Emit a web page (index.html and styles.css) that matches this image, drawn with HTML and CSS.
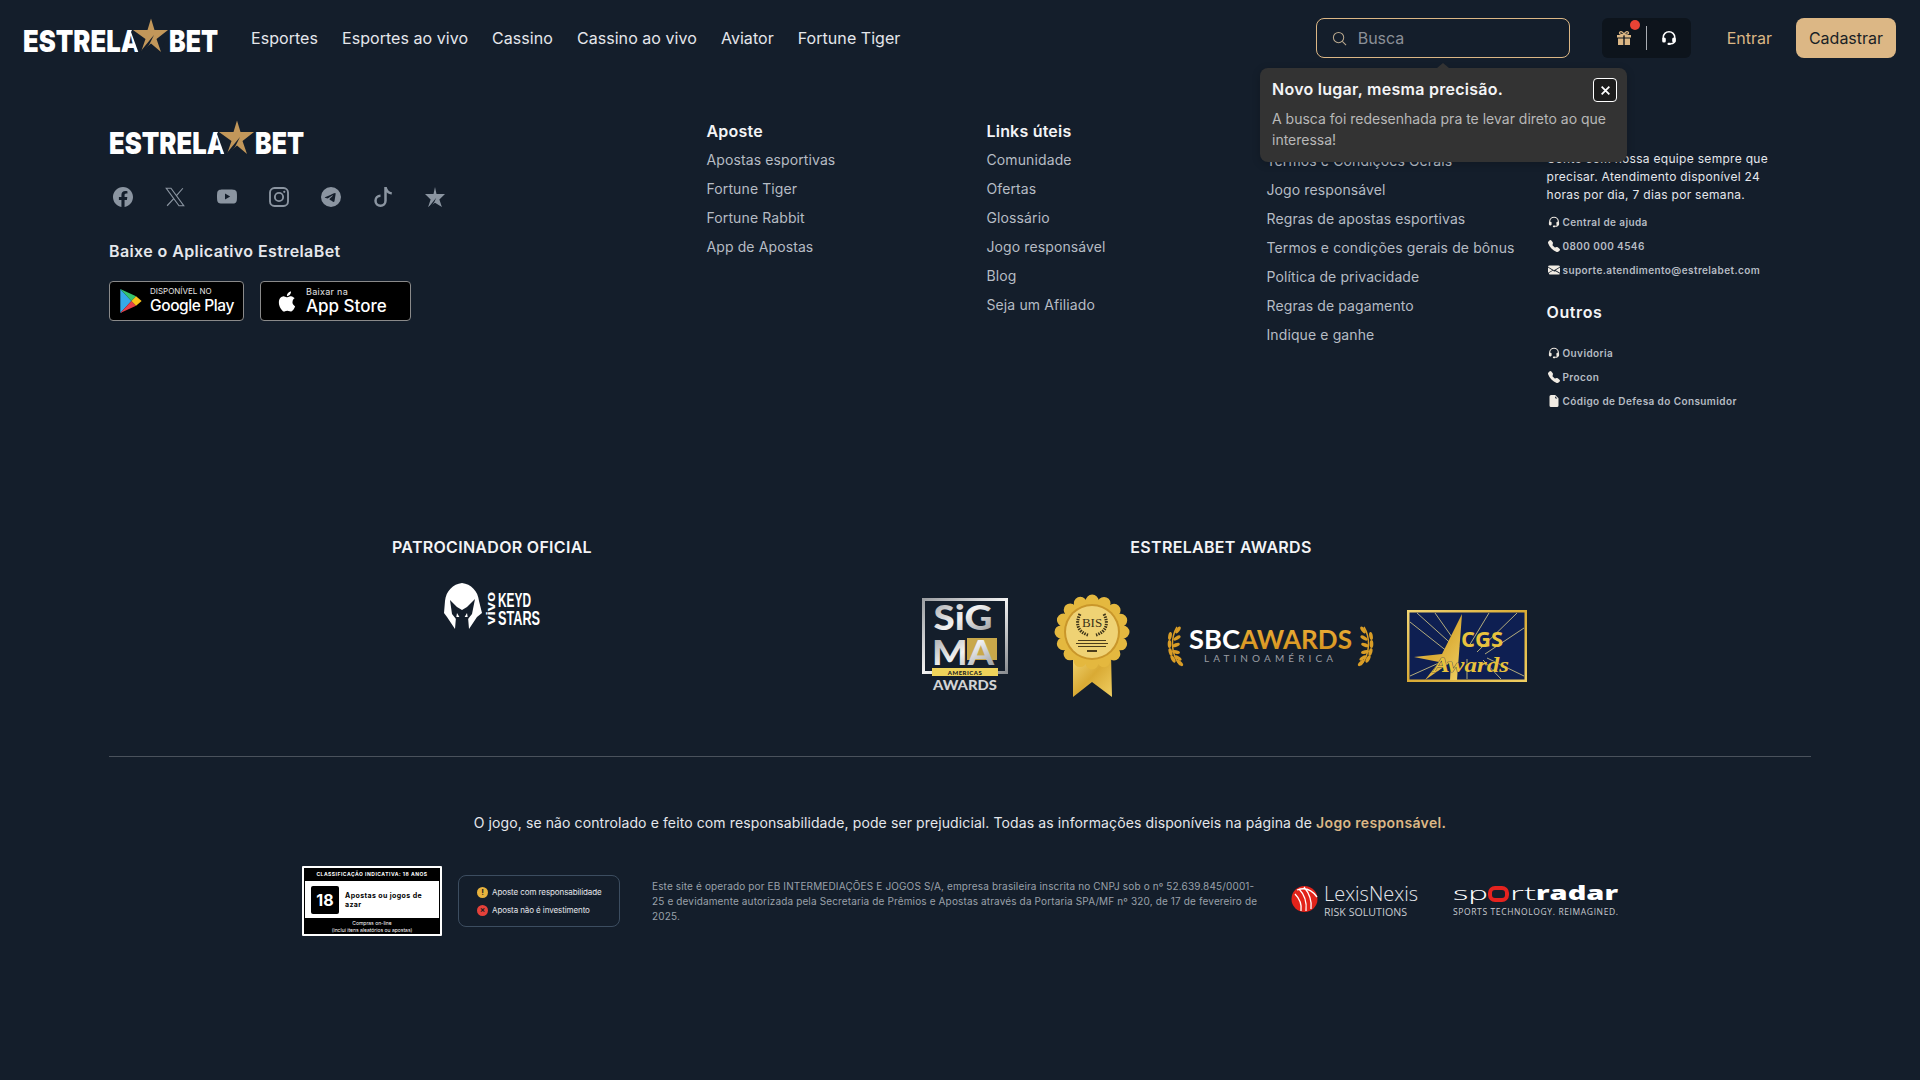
FILE: index.html
```html
<!DOCTYPE html>
<html lang="pt-BR">
<head>
  <meta charset="UTF-8">
  <meta name="viewport" content="width=device-width, initial-scale=1">
  <title>EstrelaBet</title>
  <link rel="stylesheet" href="styles.css">
</head>
<body>

  <svg class="sprite" aria-hidden="true">
    <symbol id="logo" viewBox="0 0 196 36">
      <text class="logo-text" x="0" y="34" textLength="118" lengthAdjust="spacingAndGlyphs">ESTRELA</text>
      <text class="logo-text" x="146" y="34" textLength="49" lengthAdjust="spacingAndGlyphs">BET</text>
      <polygon fill="#141e2b" points="110,10 146,10 146,14 136,36 116,36 108,14"/>
      <polygon fill="#c2975a" points="128,0.500 131.500,12 145,12 133.500,21 138,34 128,25.500 118,34 122.500,21 110,12 124.500,12"/>
      <polygon fill="#141e2b" points="117,34 131,17 126,27 120,34"/>
    </symbol>
    <symbol id="i-headset" viewBox="0 0 16 16">
      <path fill="none" stroke="currentColor" stroke-width="1.500" d="M2.200 9V7.500a5.800 5.800 0 0 1 11.600 0V10c0 2.500-1.500 3.700-4 3.700"/>
      <rect x="1.200" y="7.500" width="3.600" height="5" rx="1.500" fill="currentColor"/>
      <rect x="11.200" y="7.500" width="3.600" height="5" rx="1.500" fill="currentColor"/>
      <rect x="6.500" y="12.700" width="3.500" height="2.300" rx="1" fill="currentColor"/>
    </symbol>
    <symbol id="i-phone" viewBox="0 0 16 16">
      <path fill="currentColor" d="M1.885.511a1.745 1.745 0 0 1 2.610.163L6.290 2.980c.329.423.445.974.315 1.494l-.547 2.190a.680.680 0 0 0 .178.643l2.457 2.457a.680.680 0 0 0 .644.178l2.189-.547a1.750 1.750 0 0 1 1.494.315l2.306 1.794c.829.645.905 1.870.163 2.611l-1.034 1.034c-.740.740-1.846 1.065-2.877.702a18.600 18.600 0 0 1-7.010-4.420 18.600 18.600 0 0 1-4.420-7.009c-.362-1.030-.037-2.137.703-2.877z"/>
    </symbol>
    <symbol id="i-mail" viewBox="0 0 16 16">
      <path fill="currentColor" d="M.05 3.555A2 2 0 0 1 2 2h12a2 2 0 0 1 1.950 1.555L8 8.414zM0 4.697v7.104l5.803-3.558zM6.761 8.830l-5.570 3.225A2 2 0 0 0 2 14h12a2 2 0 0 0 1.808-1.144l-5.570-3.225L8 10.086zM16 11.801V4.697l-5.803 3.546z"/>
    </symbol>
    <symbol id="i-file" viewBox="0 0 16 16">
      <path fill="currentColor" d="M4 0h5.293A1 1 0 0 1 10 .293L13.707 4a1 1 0 0 1 .293.707V14a2 2 0 0 1-2 2H4a2 2 0 0 1-2-2V2a2 2 0 0 1 2-2m5.500 1.500v2a1 1 0 0 0 1 1h2z"/>
    </symbol>
    <symbol id="laurel" viewBox="0 0 16 42">
      <path fill="none" stroke="#d99d26" stroke-width="1.500" d="M10 2C4 12 3 28 13 40"/>
      <ellipse cx="11" cy="5" rx="1.800" ry="4" fill="#d99d26" transform="rotate(35 11 5)"/>
      <ellipse cx="10" cy="13" rx="1.800" ry="4" fill="#d99d26" transform="rotate(60 10 13)"/>
      <ellipse cx="9" cy="20" rx="1.800" ry="4" fill="#d99d26" transform="rotate(70 9 20)"/>
      <ellipse cx="9" cy="27" rx="1.800" ry="4" fill="#d99d26" transform="rotate(100 9 27)"/>
      <ellipse cx="11" cy="33" rx="1.800" ry="4" fill="#d99d26" transform="rotate(120 11 33)"/>
      <ellipse cx="3" cy="11" rx="1.800" ry="4" fill="#d99d26" transform="rotate(10 3 11)"/>
      <ellipse cx="2.500" cy="19" rx="1.800" ry="4" fill="#d99d26"/>
      <ellipse cx="3.500" cy="27" rx="1.800" ry="4" fill="#d99d26" transform="rotate(-15 3.500 27)"/>
      <ellipse cx="6" cy="34" rx="1.800" ry="4" fill="#d99d26" transform="rotate(-30 6 34)"/>
      <ellipse cx="13" cy="38" rx="1.800" ry="4" fill="#d99d26" transform="rotate(-45 13 38)"/>
    </symbol>
    <defs>
      <linearGradient id="silver" x1="0" y1="0" x2="1" y2="1">
        <stop offset="0" stop-color="#9c9fa3"/>
        <stop offset=".5" stop-color="#f2f2f2"/>
        <stop offset="1" stop-color="#8b8e92"/>
      </linearGradient>
      <linearGradient id="gold" x1="0" y1="0" x2="1" y2="1">
        <stop offset="0" stop-color="#f2d675"/>
        <stop offset=".5" stop-color="#d9aa34"/>
        <stop offset="1" stop-color="#f0cf62"/>
      </linearGradient>
      <linearGradient id="sbc-gold" x1="0" y1="0" x2="0" y2="1">
        <stop offset="0" stop-color="#f0b33a"/>
        <stop offset="1" stop-color="#d18f1c"/>
      </linearGradient>
    </defs>
  </svg>

  <header class="topbar">
    <a class="brand" href="#"><svg class="logo"><use href="#logo"/></svg></a>
    <nav class="main-nav">
      <a href="#">Esportes</a>
      <a href="#">Esportes ao vivo</a>
      <a href="#">Cassino</a>
      <a href="#">Cassino ao vivo</a>
      <a href="#">Aviator</a>
      <a href="#">Fortune Tiger</a>
    </nav>
    <div class="search">
      <svg class="search-icon" viewBox="0 0 16 16"><circle cx="7" cy="7" r="5.500" fill="none" stroke="currentColor" stroke-width="1.100"/><path d="M11 11l4 4" stroke="currentColor" stroke-width="1.100"/></svg>
      <span class="search-placeholder">Busca</span>
    </div>
    <div class="quick-actions">
      <button class="quick-btn gift-btn">
        <svg class="gift-icon" viewBox="0 0 16 16"><path fill="#dcb785" d="M1 5h6.300v2.600H1zm7.700 0H15v2.600H8.700zM2 8.500h5.300V15H2zm6.700 0H14V15H8.700z"/><path fill="none" stroke="#dcb785" stroke-width="1.300" d="M8 4.500C6.500 1 3.500 1 3.500 3c0 1.500 2.500 1.700 4.500 1.500 2-.2 4.500 0 4.500-1.500 0-2-3-2-4.500 1.500z"/></svg>
        <span class="gift-dot"></span>
      </button>
      <span class="quick-divider"></span>
      <button class="quick-btn"><svg class="headset-icon"><use href="#i-headset"/></svg></button>
    </div>
    <a class="login-link" href="#">Entrar</a>
    <a class="signup-btn" href="#">Cadastrar</a>
  </header>

  <div class="search-tip">
    <div class="tip-head">
      <strong>Novo lugar, mesma precisão.</strong>
      <button class="tip-close"><svg viewBox="0 0 10 10"><path d="M1.500 1.500l7 7m0-7l-7 7" stroke="#fff" stroke-width="1.600"/></svg></button>
    </div>
    <p>A busca foi redesenhada pra te levar direto ao que interessa!</p>
  </div>

  <footer class="site-footer">

    <div class="footer-top">
      <div class="footer-brand">
        <svg class="logo footer-logo"><use href="#logo"/></svg>
        <div class="socials">
          <svg viewBox="0 0 16 16"><path d="M16 8.049c0-4.446-3.582-8.050-8-8.050C3.580 0-.002 3.603-.002 8.050c0 4.017 2.926 7.347 6.750 7.951v-5.625h-2.030V8.050H6.750V6.275c0-2.017 1.195-3.131 3.022-3.131.876 0 1.791.157 1.791.157v1.980h-1.009c-.993 0-1.303.621-1.303 1.258v1.510h2.218l-.354 2.326H9.250V16c3.824-.604 6.750-3.934 6.750-7.951"/></svg>
          <svg viewBox="0 0 16 16"><path fill="none" stroke="currentColor" stroke-width=".9" d="M1 1h3.800l10.200 14h-3.800zM14.300 1L9 7.100M7 9.300L1.700 15"/></svg>
          <svg viewBox="0 0 16 16"><path d="M8.051 1.999h.089c.822.003 4.987.033 6.110.335a2.010 2.010 0 0 1 1.415 1.420c.101.380.172.883.220 1.402l.010.104.022.260.008.104c.065.914.073 1.770.074 1.957v.075c-.001.194-.010 1.108-.082 2.060l-.008.105-.009.104c-.050.572-.124 1.140-.235 1.558a2.010 2.010 0 0 1-1.415 1.420c-1.160.312-5.569.334-6.180.335h-.142c-.309 0-1.587-.006-2.927-.052l-.170-.006-.087-.004-.171-.007-.171-.007c-1.110-.049-2.167-.128-2.654-.260a2.010 2.010 0 0 1-1.415-1.419c-.111-.417-.185-.986-.235-1.558L.090 9.820l-.008-.104A31 31 0 0 1 0 7.680v-.123c.002-.215.010-.958.064-1.778l.007-.103.003-.052.008-.104.022-.260.010-.104c.048-.519.119-1.023.220-1.402a2.010 2.010 0 0 1 1.415-1.420c.487-.130 1.544-.210 2.654-.260l.170-.007.172-.006.086-.003.171-.007A100 100 0 0 1 7.858 2zM6.400 5.209v4.818l4.157-2.408z"/></svg>
          <svg viewBox="0 0 16 16"><rect x=".8" y=".8" width="14.400" height="14.400" rx="3.600" fill="none" stroke="currentColor" stroke-width="1.500"/><circle cx="8" cy="8" r="3.300" fill="none" stroke="currentColor" stroke-width="1.500"/><circle cx="12.200" cy="3.800" r=".9"/></svg>
          <svg viewBox="0 0 16 16"><path d="M16 8A8 8 0 1 1 0 8a8 8 0 0 1 16 0M8.287 5.906q-1.168.486-4.666 2.010-.567.225-.595.442c-.030.243.275.339.690.470l.175.055c.408.133.958.288 1.243.294q.390.010.868-.320 3.269-2.206 3.374-2.230c.050-.012.120-.026.166.016s.042.120.037.141c-.030.129-1.227 1.241-1.846 1.817-.193.180-.330.307-.358.336a8 8 0 0 1-.188.186c-.380.366-.664.640.015 1.088.327.216.589.393.850.571.284.194.568.387.936.629q.140.092.270.187c.331.236.630.448.997.414.214-.020.435-.220.547-.820.265-1.417.786-4.486.906-5.751a1.400 1.400 0 0 0-.013-.315.340.340 0 0 0-.114-.217.400.400 0 0 0-.240-.070c-.280.005-.710.153-2.713 1.002"/></svg>
          <svg viewBox="0 0 16 16"><path d="M9 0h1.980c.144.715.540 1.617 1.235 2.512C12.895 3.389 13.797 4 15 4v2c-1.753 0-3.070-.814-4-1.829V11a5 5 0 1 1-5-5v2a3 3 0 1 0 3 3z"/></svg>
          <svg viewBox="0 0 16 16"><polygon points="8,0 9.200,5.500 16,5.500 11.500,10 13.500,16 8,12.500 2.500,16 4.500,10 0,5.500 6.800,5.500"/><polygon fill="#141e2b" points="3,16 9,8.500 7.500,12 4.500,16"/></svg>
        </div>
        <h3 class="app-title">Baixe o Aplicativo EstrelaBet</h3>
        <div class="store-badges">
          <a class="store-badge badge-google" href="#">
            <svg class="play-icon" viewBox="0 0 24 28">
              <polygon points="1,1 1,27 13,14" fill="#35a9e8"/>
              <polygon points="1,1 13,14 18,9" fill="#36c46f"/>
              <polygon points="1,27 13,14 18,19" fill="#e8404a"/>
              <polygon points="18,9 13,14 18,19 24,14" fill="#fcc31a"/>
            </svg>
            <span class="store-text">
              <small class="store-small">DISPONÍVEL NO</small>
              <b class="store-name store-name-google">Google Play</b>
            </span>
          </a>
          <a class="store-badge badge-apple" href="#">
            <svg class="apple-icon" viewBox="0 0 16 16"><path fill="#fff" d="M11.182.008C11.148-.030 9.923.023 8.857 1.180c-1.066 1.156-.902 2.482-.878 2.516s1.520.087 2.475-1.258.762-2.391.728-2.430m3.314 11.733c-.048-.096-2.325-1.234-2.113-3.422s1.675-2.789 1.698-2.854-.597-.790-1.254-1.157a3.700 3.700 0 0 0-1.563-.434c-.108-.003-.483-.095-1.254.116-.508.139-1.653.589-1.968.607-.316.018-1.256-.522-2.267-.665-.647-.125-1.333.131-1.824.328-.490.196-1.422.754-2.074 2.237-.652 1.482-.311 3.830-.067 4.560s.625 1.924 1.273 2.796c.576.984 1.340 1.667 1.659 1.899s1.219.386 1.843.067c.502-.308 1.408-.485 1.766-.472.357.013 1.061.154 1.782.539.571.197 1.111.115 1.652-.105.541-.221 1.324-1.059 2.238-2.758q.520-1.185.473-1.282"/></svg>
            <span class="store-text">
              <small class="store-small store-small-apple">Baixar na</small>
              <b class="store-name">App Store</b>
            </span>
          </a>
        </div>
      </div>

      <div class="link-col">
        <h4>Aposte</h4>
        <a href="#">Apostas esportivas</a>
        <a href="#">Fortune Tiger</a>
        <a href="#">Fortune Rabbit</a>
        <a href="#">App de Apostas</a>
      </div>

      <div class="link-col">
        <h4>Links úteis</h4>
        <a href="#">Comunidade</a>
        <a href="#">Ofertas</a>
        <a href="#">Glossário</a>
        <a href="#">Jogo responsável</a>
        <a href="#">Blog</a>
        <a href="#">Seja um Afiliado</a>
      </div>

      <div class="link-col link-col-rules">
        <h4>Regras</h4>
        <a href="#">Termos e Condições Gerais</a>
        <a href="#">Jogo responsável</a>
        <a href="#">Regras de apostas esportivas</a>
        <a href="#">Termos e condições gerais de bônus</a>
        <a href="#">Política de privacidade</a>
        <a href="#">Regras de pagamento</a>
        <a href="#">Indique e ganhe</a>
      </div>

      <div class="support-col">
        <h4>Suporte</h4>
        <p>Conte com nossa equipe sempre que precisar. Atendimento disponível 24 horas por dia, 7 dias por semana.</p>
        <a class="contact" href="#"><svg><use href="#i-headset"/></svg>Central de ajuda</a>
        <a class="contact" href="#"><svg><use href="#i-phone"/></svg>0800 000 4546</a>
        <a class="contact" href="#"><svg><use href="#i-mail"/></svg>suporte.atendimento@estrelabet.com</a>
        <h4 class="others-title">Outros</h4>
        <a class="contact" href="#"><svg><use href="#i-headset"/></svg>Ouvidoria</a>
        <a class="contact" href="#"><svg><use href="#i-phone"/></svg>Procon</a>
        <a class="contact" href="#"><svg><use href="#i-file"/></svg>Código de Defesa do Consumidor</a>
      </div>
    </div>

    <div class="partners">
      <section class="sponsor">
        <h3>PATROCINADOR OFICIAL</h3>
        <svg class="keyd-logo" viewBox="0 0 96 46">
          <path fill="#fff" d="M18 0C27 1 34 8 35 18L38 30 33 34 25 46 24 34H12L11 46 3 34-0 30 1 18C2 8 9 1 18 0z"/>
          <polygon fill="#141e2b" points="6,17 13,24 18,27 23,24 31,16 28,31 24,36 23,30 20,35 20,46 16,46 16,35 13,30 12,36 8,31"/>
          <text class="keyd-vivo" transform="translate(51 42) rotate(-90)" textLength="33" lengthAdjust="spacingAndGlyphs">vivo</text>
          <text class="keyd-text" x="54" y="24" textLength="33" lengthAdjust="spacingAndGlyphs">KEYD</text>
          <text class="keyd-text" x="54" y="42" textLength="42" lengthAdjust="spacingAndGlyphs">STARS</text>
        </svg>
      </section>
      <section class="awards">
        <h3>ESTRELABET AWARDS</h3>
        <div class="award-row">
          <svg class="award-sigma" viewBox="0 0 99 95">
            <rect x="1.500" y="1.500" width="83" height="73" fill="none" stroke="url(#silver)" stroke-width="3"/>
            <text class="sigma-text" x="41" y="32" text-anchor="middle" textLength="59" lengthAdjust="spacingAndGlyphs">SiG</text>
            <rect x="45" y="40" width="30" height="22" fill="#c9a84a"/>
            <text class="sigma-text" x="41" y="67" text-anchor="middle" textLength="62" lengthAdjust="spacingAndGlyphs">MA</text>
            <rect x="10" y="70" width="66" height="8" fill="#efd35a"/>
            <text class="sigma-band" x="43" y="76.500" text-anchor="middle">AMERICAS</text>
            <text class="sigma-awards" x="43" y="92" text-anchor="middle" textLength="64" lengthAdjust="spacingAndGlyphs">AWARDS</text>
          </svg>
          <svg class="award-bis" viewBox="0 0 76 103">
            <polygon points="19,60 57,60 58,103 38,88 19,103" fill="url(#gold)"/>
            <circle cx="38" cy="38" r="31" fill="#e4b83f"/>
            <circle cx="38" cy="38" r="31" fill="none" stroke="#e4b83f" stroke-width="13" stroke-linecap="round" stroke-dasharray="0 12.170"/>
            <circle cx="38" cy="38" r="28" fill="#c9962a"/>
            <circle cx="38" cy="38" r="26" fill="#efd274"/>
            <text class="bis-text" x="38" y="33" text-anchor="middle">BIS</text>
            <path fill="none" stroke="#3c3217" stroke-width="3" stroke-dasharray="1.500 1" d="M26 20c-5 10-2 18 8 21M50 20c5 10 2 18-8 21"/>
            <rect x="24" y="46" width="28" height="1" fill="#4b3d1b"/>
            <rect x="22" y="49" width="32" height="1" fill="#4b3d1b"/>
            <rect x="24" y="52" width="28" height="1" fill="#4b3d1b"/>
            <rect x="33" y="56" width="10" height="2" fill="#4b3d1b"/>
          </svg>
          <svg class="award-sbc" viewBox="0 0 211 42">
            <use href="#laurel" x="4" y="0" width="16" height="42"/>
            <use href="#laurel" transform="matrix(-1 0 0 1 211 0)" x="0" y="0" width="16" height="42"/>
            <text class="sbc-text" x="26" y="24" fill="#fff" textLength="51" lengthAdjust="spacingAndGlyphs">SBC</text>
            <text class="sbc-text" x="77" y="24" fill="url(#sbc-gold)" textLength="112" lengthAdjust="spacingAndGlyphs">AWARDS</text>
            <text class="sbc-sub" x="41" y="37" textLength="129">LATINOAMÉRICA</text>
          </svg>
          <svg class="award-cgs" viewBox="0 0 120 72">
            <rect width="120" height="72" fill="url(#gold)"/>
            <rect x="2.500" y="2.500" width="115" height="67" fill="#0e1f52"/>
            <path stroke="#b3ac7c" stroke-width="1" d="M3 12l38 30M10 3l40 36M28 3l24 34M82 3L62 36M110 3L70 42M117 18L78 44M3 66l40-18M117 66L80 48M94 69L76 50M60 69v-20"/>
            <polygon points="55,4 50,70 43,70 44,52 18,70 32,52 7,47 35,44" fill="url(#gold)"/>
            <text class="cgs-text" x="75" y="37" text-anchor="middle">CGS</text>
            <text class="cgs-awards" x="26" y="62" textLength="76" lengthAdjust="spacingAndGlyphs">Awards</text>
          </svg>
        </div>
      </section>
    </div>

    <hr class="footer-rule">

    <p class="disclaimer">O jogo, se não controlado e feito com responsabilidade, pode ser prejudicial. Todas as informações disponíveis na página de <a href="#">Jogo responsável.</a></p>

    <div class="legal-row">
      <div class="age-box">
        <div class="age-top">CLASSIFICAÇÃO INDICATIVA: 18 ANOS</div>
        <div class="age-mid">
          <span class="age-num">18</span>
          <span class="age-label">Apostas ou jogos de azar</span>
        </div>
        <div class="age-bottom">Compras on-line<br>(inclui itens aleatórios ou apostas)</div>
      </div>
      <div class="warn-box">
        <div class="warn-line"><span class="warn-dot warn-yellow">!</span>Aposte com responsabilidade</div>
        <div class="warn-line"><span class="warn-dot warn-red">×</span>Aposta não é investimento</div>
      </div>
      <p class="legal-text">Este site é operado por EB INTERMEDIAÇÕES E JOGOS S/A, empresa brasileira inscrita no CNPJ sob o nº 52.639.845/0001-25 e devidamente autorizada pela Secretaria de Prêmios e Apostas através da Portaria SPA/MF nº 320, de 17 de fevereiro de 2025.</p>
      <svg class="lexis-logo" viewBox="0 0 128 34">
        <circle cx="12.500" cy="15" r="13" fill="#e2231a"/>
        <path fill="none" stroke="#fff" stroke-width="1.300" d="M5 6c8-3 15 0 20 7M3 10c4 4 7 10 6 17M7 5c5 5 8 13 7 22M12 3c5 6 8 14 7 22"/>
        <text class="lexis-name" x="32" y="17" textLength="94" lengthAdjust="spacingAndGlyphs">LexisNexis</text>
        <text class="lexis-sub" x="32" y="32" textLength="83" lengthAdjust="spacingAndGlyphs">RISK SOLUTIONS</text>
      </svg>
      <svg class="radar-logo" viewBox="0 0 167 31">
        <text class="radar-thin" x="0" y="13.500" textLength="35" lengthAdjust="spacingAndGlyphs">sp</text>
        <rect x="37" y="2" width="17" height="12" rx="5" fill="none" stroke="#e5231f" stroke-width="4"/>
        <text class="radar-thin" x="57" y="13.500" textLength="26" lengthAdjust="spacingAndGlyphs">rt</text>
        <text class="radar-bold" x="83" y="13.500" textLength="82" lengthAdjust="spacingAndGlyphs">radar</text>
        <text class="radar-sub" x="0" y="29" textLength="165">SPORTS TECHNOLOGY. REIMAGINED.</text>
      </svg>
    </div>

  </footer>

</body>
</html>
```

FILE: styles.css
```css
* {
  box-sizing: border-box;
}
body {
  margin: 0;
  background-color: #141e2b;
  color: #f3f4f6;
  font-family: Inter, "Liberation Sans", sans-serif;
  font-size: 14px;
  position: relative;
  min-height: 100vh;
}
a {
  color: inherit;
  text-decoration: none;
}
h3, h4, p {
  margin: 0;
}
svg, symbol {
  overflow: visible;
}
.sprite {
  position: absolute;
  width: 0;
  height: 0;
}

/* header */
.topbar {
  display: flex;
  align-items: center;
  height: 76px;
  padding: 0 24px 0 23px;
}
.brand {
  margin-bottom: 4px;
}
.logo {
  display: block;
  width: 196px;
  height: 36px;
}
.logo-text {
  font-family: Inter, sans-serif;
  font-weight: 900;
  font-size: 30px;
  fill: #fff;
}
.main-nav {
  display: flex;
  gap: 24px;
  margin-left: 32px;
  font-size: 16px;
  line-height: 24px;
  letter-spacing: 0.05px;
  color: #e5e7eb;
}
.search {
  display: flex;
  align-items: center;
  width: 254px;
  height: 40px;
  margin-left: auto;
  padding-left: 15px;
  border: 1px solid #dcb785;
  border-radius: 8px;
}
.search-icon {
  width: 15px;
  height: 15px;
  color: #b9a88d;
}
.search-placeholder {
  margin-left: 11px;
  font-size: 16px;
  color: #8b9097;
}
.quick-actions {
  display: flex;
  align-items: center;
  width: 89px;
  height: 40px;
  margin-left: 32px;
  background-color: #0d141c;
  border-radius: 6px;
}
.quick-btn {
  position: relative;
  flex: 1;
  display: flex;
  justify-content: center;
  padding: 0;
  background: none;
  border: none;
  color: #fff;
}
.gift-icon {
  width: 16px;
  height: 16px;
}
.headset-icon {
  width: 16px;
  height: 16px;
}
.gift-dot {
  position: absolute;
  top: -10px;
  left: 28px;
  width: 10px;
  height: 10px;
  background-color: #ea4335;
  border-radius: 50%;
}
.quick-divider {
  width: 1px;
  height: 24px;
  background-color: #a9adb3;
}
.login-link {
  margin-left: 36px;
  font-size: 16px;
  color: #dcb785;
}
.signup-btn {
  display: flex;
  align-items: center;
  justify-content: center;
  width: 100px;
  height: 40px;
  margin-left: 24px;
  background-color: #dcb785;
  border-radius: 8px;
  font-size: 16px;
  color: #1a1f26;
}

/* popover */
.search-tip {
  position: absolute;
  top: 68px;
  left: 1260px;
  width: 367px;
  height: 94px;
  padding: 10px 12px;
  background-color: #333333;
  border-radius: 8px;
  box-shadow: 0 2px 8px rgba(0,0,0,0.2);
}
.search-tip::before {
  content: "";
  position: absolute;
  top: -5px;
  left: 177px;
  border-left: 6px solid transparent;
  border-right: 6px solid transparent;
  border-bottom: 5px solid #333333;
}
.tip-head {
  display: flex;
  justify-content: space-between;
  align-items: center;
  height: 24px;
  font-size: 16px;
  font-weight: 600;
  color: #f3f4f6;
}
.tip-head strong {
  font-weight: 600;
  letter-spacing: 0.27px;
  margin-top: -2px;
}
.tip-close {
  display: flex;
  align-items: center;
  justify-content: center;
  width: 24px;
  height: 24px;
  margin-right: -2px;
  padding: 0;
  background-color: #1c1c1c;
  border: 1px solid #fff;
  border-radius: 4px;
}
.tip-close svg {
  width: 11px;
  height: 11px;
}
.search-tip p {
  margin-top: 6px;
  line-height: 21px;
  color: #b8b8b8;
}

/* footer */
.site-footer {
  padding: 43px 109px 0;
}
.footer-top {
  display: grid;
  grid-template-columns: 581.5px repeat(4, 264px);
  gap: 16px;
  height: 416px;
}
.footer-logo {
  margin-top: 1px;
}
.socials {
  display: flex;
  gap: 32px;
  margin: 31px 0 0 4px;
  color: #8b95a1;
}
.socials svg {
  width: 20px;
  height: 20px;
  fill: currentColor;
}
.app-title {
  margin-top: 32px;
  font-size: 16px;
  font-weight: 600;
  line-height: 24px;
  letter-spacing: 0.4px;
  color: #e5e7eb;
}
.store-badges {
  display: flex;
  gap: 16px;
  margin-top: 18px;
}
.store-badge {
  display: flex;
  align-items: center;
  height: 40px;
  background-color: #000;
  border: 1px solid #8a8a8a;
  border-radius: 4px;
  color: #fff;
}
.badge-google {
  width: 135px;
  padding-left: 9px;
}
.badge-apple {
  width: 151px;
  padding-left: 16px;
}
.play-icon {
  width: 23px;
  height: 26px;
  margin-right: 8px;
}
.apple-icon {
  width: 20px;
  height: 25px;
  margin-right: 9px;
}
.store-text {
  display: flex;
  flex-direction: column;
}
.store-small {
  font-size: 8px;
  line-height: 9px;
  color: #e5e5e5;
}
.store-small-apple {
  font-size: 9px;
  letter-spacing: 0.3px;
}
.store-name {
  font-size: 17px;
  font-weight: 500;
  line-height: 20px;
}
.store-name-google {
  font-size: 15.500px;
  letter-spacing: -0.4px;
}
.link-col {
  display: flex;
  flex-direction: column;
  gap: 8px;
}
.link-col h4,
.support-col h4 {
  margin-bottom: -2px;
  font-size: 16px;
  font-weight: 600;
  line-height: 24px;
  letter-spacing: 0.2px;
  color: #f3f4f6;
}
.link-col-rules h4 {
  margin-bottom: -1px;
}
.link-col a {
  line-height: 21px;
  letter-spacing: 0.11px;
  color: #b6bcc4;
}
.support-col h4 {
  margin-bottom: 0;
}
.support-col p {
  width: 240px;
  margin-top: 7px;
  margin-bottom: 6px;
  font-size: 12px;
  line-height: 18px;
  letter-spacing: 0.3px;
  color: #e5e7eb;
}
.contact {
  display: flex;
  align-items: center;
  gap: 2px;
  height: 24px;
  font-size: 10px;
  font-weight: 600;
  letter-spacing: 0.4px;
  color: #b6bcc4;
}
.contact svg {
  width: 14px;
  height: 14px;
  padding: 1px;
  color: #f0ebe3;
}
.support-col .others-title {
  margin-top: 18px;
  margin-bottom: 17px;
  letter-spacing: 0.6px;
}

.partners {
  display: flex;
  padding-left: 283px;
  gap: 330px;
}
.partners h3 {
  font-size: 16px;
  font-weight: 600;
  line-height: 24px;
  letter-spacing: 0.3px;
  text-align: center;
  color: #f3f4f6;
}
.sponsor {
  width: 200px;
}
.keyd-logo {
  display: block;
  width: 96px;
  height: 46px;
  margin: 24px auto 0;
}
.keyd-vivo {
  font-family: "Liberation Sans", sans-serif;
  font-weight: 700;
  font-size: 12px;
  fill: #fff;
}
.keyd-text {
  font-family: "Liberation Sans", sans-serif;
  font-weight: 700;
  font-size: 21px;
  fill: #fff;
}
.awards {
  width: 605px;
}
.awards h3 {
  padding-right: 7px;
}
.award-row {
  display: flex;
  align-items: center;
  gap: 33px;
  margin-top: 35px;
}
.award-sigma {
  width: 99px;
  height: 95px;
}
.award-bis {
  width: 76px;
  height: 103px;
}
.award-sbc {
  width: 211px;
  height: 42px;
}
.award-cgs {
  width: 120px;
  height: 72px;
}
.sigma-text {
  font-family: Lato, sans-serif;
  font-weight: 900;
  font-size: 34px;
  fill: url(#silver);
}
.sigma-band {
  font-family: Lato, sans-serif;
  font-weight: 900;
  font-size: 6px;
  letter-spacing: 0.5px;
  fill: #222;
}
.sigma-awards {
  font-family: Lato, sans-serif;
  font-weight: 900;
  font-size: 14px;
  fill: #d2d3d5;
}
.bis-text {
  font-family: "Liberation Serif", serif;
  font-size: 13px;
  fill: #3c3217;
}
.sbc-text {
  font-family: Lato, sans-serif;
  font-weight: 700;
  font-size: 27px;
}
.sbc-sub {
  font-family: Lato, sans-serif;
  font-size: 10px;
  fill: #9a9da3;
}
.cgs-text {
  font-family: "Open Sans", sans-serif;
  font-weight: 700;
  font-size: 22px;
  fill: #e8c23d;
}
.cgs-awards {
  font-family: "Liberation Serif", serif;
  font-style: italic;
  font-weight: 700;
  font-size: 21px;
  fill: #e8c23d;
  stroke: #0e1f52;
  stroke-width: 0.6px;
  paint-order: stroke;
}

.footer-rule {
  margin: 59px 0 0;
  border: none;
  border-top: 1px solid #4a525c;
}
.disclaimer {
  margin-top: 56px;
  line-height: 20px;
  letter-spacing: 0.11px;
  text-align: center;
  color: #e5e7eb;
}
.disclaimer a {
  font-weight: 600;
  letter-spacing: 0.35px;
  color: #dcb785;
}

.legal-row {
  display: flex;
  align-items: center;
  margin-top: 33px;
  padding-left: 193px;
}
.age-box {
  display: flex;
  flex-direction: column;
  width: 140px;
  height: 70px;
  background-color: #000;
  border: 2px solid #fff;
  border-radius: 1px;
  color: #fff;
  text-align: center;
}
.age-top {
  padding-top: 3px;
  height: 13px;
  font-size: 5px;
  font-weight: 700;
  letter-spacing: 0.5px;
}
.age-mid {
  display: flex;
  align-items: center;
  height: 37px;
  margin: 0 1px;
  padding-left: 6px;
  background-color: #fff;
  color: #000;
  text-align: left;
}
.age-num {
  display: flex;
  align-items: center;
  justify-content: center;
  flex: none;
  width: 28px;
  height: 28px;
  background-color: #000;
  border-radius: 2px;
  color: #fff;
  font-size: 16px;
  font-weight: 700;
}
.age-label {
  margin-left: 6px;
  font-size: 7px;
  font-weight: 700;
  line-height: 9px;
  letter-spacing: 0.4px;
}
.age-bottom {
  padding-top: 2px;
  font-size: 5px;
  line-height: 7px;
}
.warn-box {
  display: flex;
  flex-direction: column;
  justify-content: center;
  gap: 6px;
  width: 162px;
  height: 52px;
  margin-left: 16px;
  padding-left: 18px;
  border: 1px solid #3c4d60;
  border-radius: 8px;
}
.warn-line {
  display: flex;
  align-items: center;
  gap: 4px;
  font-size: 8px;
  line-height: 12px;
  letter-spacing: -0.09px;
  color: #e5e7eb;
}
.warn-dot {
  display: flex;
  align-items: center;
  justify-content: center;
  width: 11px;
  height: 11px;
  border-radius: 50%;
  font-size: 8px;
  font-weight: 700;
  color: #222;
}
.warn-yellow {
  background-color: #e8b23d;
}
.warn-red {
  background-color: #e5413a;
}
.legal-text {
  width: 608px;
  margin-left: 32px;
  font-size: 10px;
  line-height: 15px;
  letter-spacing: 0.14px;
  color: #9aa1aa;
}
.lexis-logo {
  width: 128px;
  height: 34px;
  margin-left: 32px;
}
.lexis-name {
  font-family: "Open Sans", sans-serif;
  font-weight: 300;
  font-size: 21px;
  fill: #e5e7eb;
}
.lexis-sub {
  font-family: "Open Sans", sans-serif;
  font-size: 11.500px;
  fill: #c9ccd1;
}
.radar-logo {
  width: 167px;
  height: 31px;
  margin-left: 33px;
}
.radar-thin {
  font-family: "Open Sans", sans-serif;
  font-weight: 300;
  font-size: 19px;
  fill: #fff;
}
.radar-bold {
  font-family: "Open Sans", sans-serif;
  font-weight: 800;
  font-size: 19px;
  fill: #fff;
}
.radar-sub {
  font-family: "Open Sans", sans-serif;
  font-size: 8.500px;
  fill: #c9ccd1;
}
```
